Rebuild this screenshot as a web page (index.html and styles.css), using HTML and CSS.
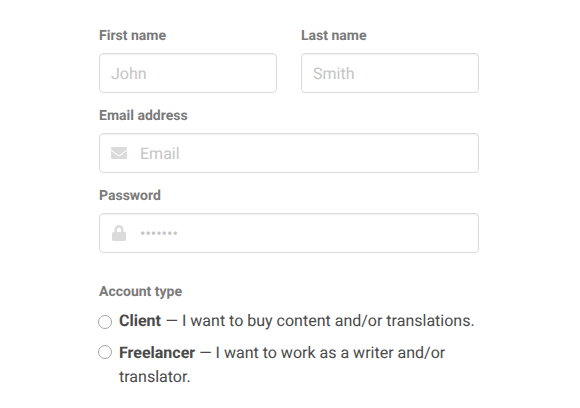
FILE: index.html
```
<!DOCTYPE html>
<html lang="en">
<head>
<meta charset="utf-8">
<title>Sign up</title>
<link rel="stylesheet" href="styles.css">
</head>
<body>
<form class="form">
  <div class="row">
    <label class="field"><span class="label">First name</span><span class="control"><input class="input" type="text" placeholder="John"></span></label>
    <label class="field"><span class="label">Last name</span><span class="control"><input class="input" type="text" placeholder="Smith"></span></label>
  </div>
  <label class="field"><span class="label">Email address</span>
    <span class="control">
      <svg class="icon" width="16" height="16" viewBox="0 0 512 512"><path d="M502.3 190.8c3.9-3.1 9.7-.2 9.7 4.7V400c0 26.5-21.5 48-48 48H48c-26.5 0-48-21.5-48-48V195.600c0-5 5.700-7.800 9.700-4.700 22.400 17.400 52.100 39.500 154.100 113.600 21.100 15.400 56.700 47.800 92.200 47.600 35.700.3 72-32.800 92.300-47.600 102-74.100 131.600-96.300 154-113.700zM256 320c23.200.4 56.600-29.200 73.400-41.400 132.700-96.300 142.800-104.700 173.400-128.700 5.800-4.500 9.200-11.500 9.200-18.900v-19c0-26.500-21.500-48-48-48H48c-26.500 0-48 21.500-48 48v19c0 7.400 3.400 14.300 9.200 18.900 30.600 23.900 40.700 32.400 173.400 128.700 16.800 12.200 50.200 41.800 73.400 41.400z"/></svg>
      <input class="input" type="text" placeholder="Email">
    </span>
  </label>
  <label class="field"><span class="label">Password</span>
    <span class="control">
      <svg class="icon" width="16" height="16" viewBox="0 0 512 512"><path d="M424 224h-24v-72C400 68 336 0 256 0S112 68 112 152v72H80c-27 0-48 21-48 48v192c0 27 21 48 48 48h352c27 0 48-21 48-48V272c0-27-21-48-48-48zm-104 0H192v-72c0-35 29-64 64-64s64 29 64 64z"/></svg>
      <input class="input" type="text" placeholder="•••••••">
    </span>
  </label>
  <fieldset class="account">
    <legend class="label">Account type</legend>
    <label class="option"><input class="radio" type="radio" name="type"><span><b class="name">Client</b> — I want to buy content and/or translations.</span></label>
    <label class="option"><input class="radio radio-raised" type="radio" name="type"><span><b>Freelancer</b> — I want to work as a writer and/or translator.</span></label>
  </fieldset>
</form>
</body>
</html>
```
FILE: styles.css
```
* { box-sizing: border-box; }
body { margin: 0; background: #fff; color: #4a4a4a; font: 16px/24px Roboto, sans-serif; text-rendering: geometricPrecision; }
.form { width: 380px; margin: 0 0 0 99px; padding-top: 25px; }
.row { display: grid; grid-template-columns: 1fr 1fr; gap: 24px; }
.field { display: block; height: 80px; }
.label { display: block; height: 28px; padding: 0; font-size: 14px; line-height: 22px; font-weight: 700; color: #7a7a7a; }
.control { display: flex; align-items: center; height: 40px; padding: 0 11px; border: 1px solid #dbdbdb; border-radius: 4px; box-shadow: inset 0 1px 2px rgba(10,10,10,.06); }
.icon { flex: none; margin-right: 13px; fill: #dbdbdb; }
.input { width: 100%; min-width: 0; padding: 2px 0 0; border: 0; outline: 0; background: transparent; font: inherit; color: inherit; text-rendering: inherit; }
.input::placeholder { color: #c4c4c4; opacity: 1; }
.account { margin: 16px 0 0; padding: 0; border: 0; }
.option { display: flex; align-items: flex-start; margin-bottom: 8px; }
.name { margin-right: .6px; }
.radio { appearance: none; flex: none; width: 14px; height: 14px; margin: 6px 7px 0 -1px; border: 1px solid #a6a6a6; border-radius: 50%; }
.radio-raised { margin-top: 4px; }
```
